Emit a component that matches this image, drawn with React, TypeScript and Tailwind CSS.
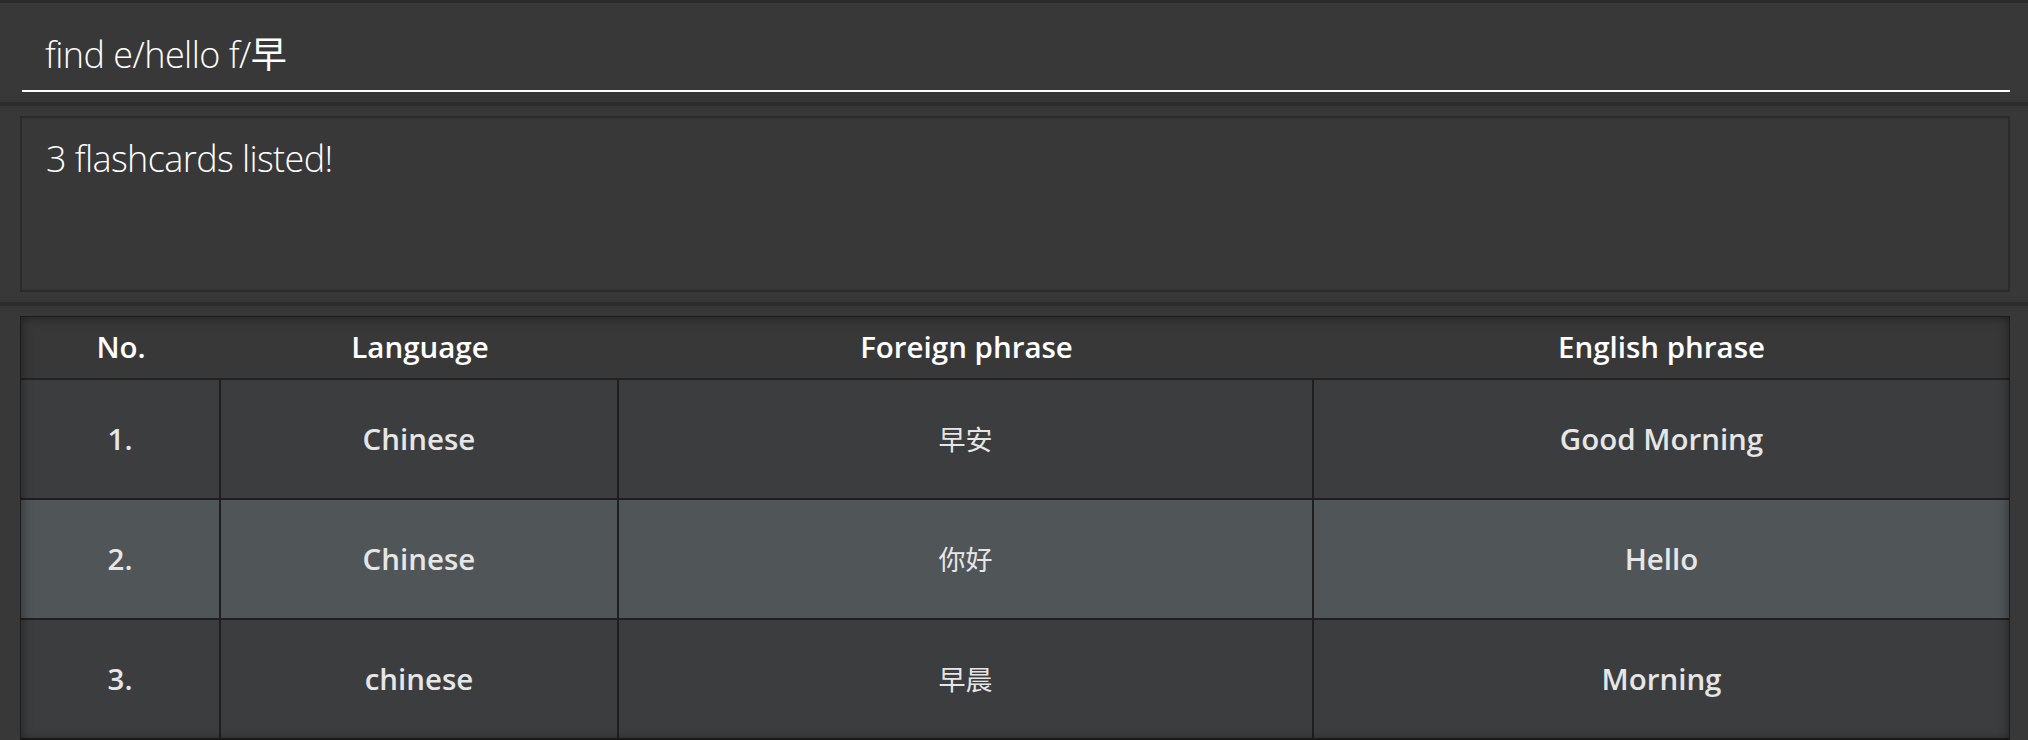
import React from 'react';

type Card = { no: string; lang: string; foreign: string; english: string };

const cards: Card[] = [
  { no: '1.', lang: 'Chinese', foreign: '早安', english: 'Good Morning' },
  { no: '2.', lang: 'Chinese', foreign: '你好', english: 'Hello' },
  { no: '3.', lang: 'chinese', foreign: '早晨', english: 'Morning' },
];

const sans = "font-['Open_Sans','Noto_Sans_CJK_SC',sans-serif]";
const cjk = "font-['Noto_Sans_CJK_SC',sans-serif]";
const cols = 'grid grid-cols-[200px_398px_695px_1fr]';

function Separator() {
  return <div className="h-[4px] bg-[#2b2b2b] flex-shrink-0" />;
}

export default function App() {
  return (
    <div className={`w-full h-[740px] bg-[#383838] flex flex-col overflow-hidden ${sans}`}>
      <div className="h-[3px] bg-[#2b2b2b] flex-shrink-0" />

      {/* Command box */}
      <div className="h-[99px] flex flex-col justify-end pl-[22px] pr-[18px] pb-[10px] flex-shrink-0">
        <div className="border-b-2 border-white pl-[23px] pb-[15px] text-[36px] leading-[40px] font-light tracking-[-0.55px] text-white">
          find e/hello f/<span className={`${cjk} font-normal tracking-normal`}>早</span>
        </div>
      </div>

      <Separator />

      {/* Result display */}
      <div className="h-[196px] pt-[10px] pb-[10px] pl-[20px] pr-[18px] flex-shrink-0">
        <div className="h-full border-2 border-[#2b2b2b] pl-[24px] pt-[21px] text-[36px] leading-[40px] font-light tracking-[-0.6px] text-white">
          3 flashcards listed!
        </div>
      </div>

      <Separator />

      {/* Flashcard table */}
      <div className="flex-1 pt-[10px] pl-[20px] pr-[18px] min-h-0">
        <div className="relative border border-[#1c1c1c] border-b-0">
          <div className={`${cols} h-[63px] bg-[#383838] border-b-2 border-[#232323] text-white text-[29.5px] font-semibold`}>
            <div className="flex items-center justify-center">No.</div>
            <div className="flex items-center justify-center">Language</div>
            <div className="flex items-center justify-center">Foreign phrase</div>
            <div className="flex items-center justify-center">English phrase</div>
          </div>
          {cards.map((c, i) => (
            <div
              key={c.no}
              className={`${cols} h-[120px] border-b-2 border-[#1f1f1f] text-[#e6e6e6] text-[29.5px] font-semibold ${
                i === 1 ? 'bg-[#505558]' : 'bg-[#3c3d3f]'
              }`}
            >
              <div className="flex items-center justify-center border-r-2 border-[#1f1f1f]">{c.no}</div>
              <div className="flex items-center justify-center border-r-2 border-[#1f1f1f]">{c.lang}</div>
              <div className={`flex items-center justify-center border-r-2 border-[#1f1f1f] ${cjk} font-normal text-[27px]`}>
                {c.foreign}
              </div>
              <div className="flex items-center justify-center">{c.english}</div>
            </div>
          ))}
          {/* inner shadow over the table edges */}
          <div className="absolute inset-0 pointer-events-none shadow-[inset_0_0_12px_rgba(0,0,0,0.45)]" />
        </div>
      </div>
    </div>
  );
}
